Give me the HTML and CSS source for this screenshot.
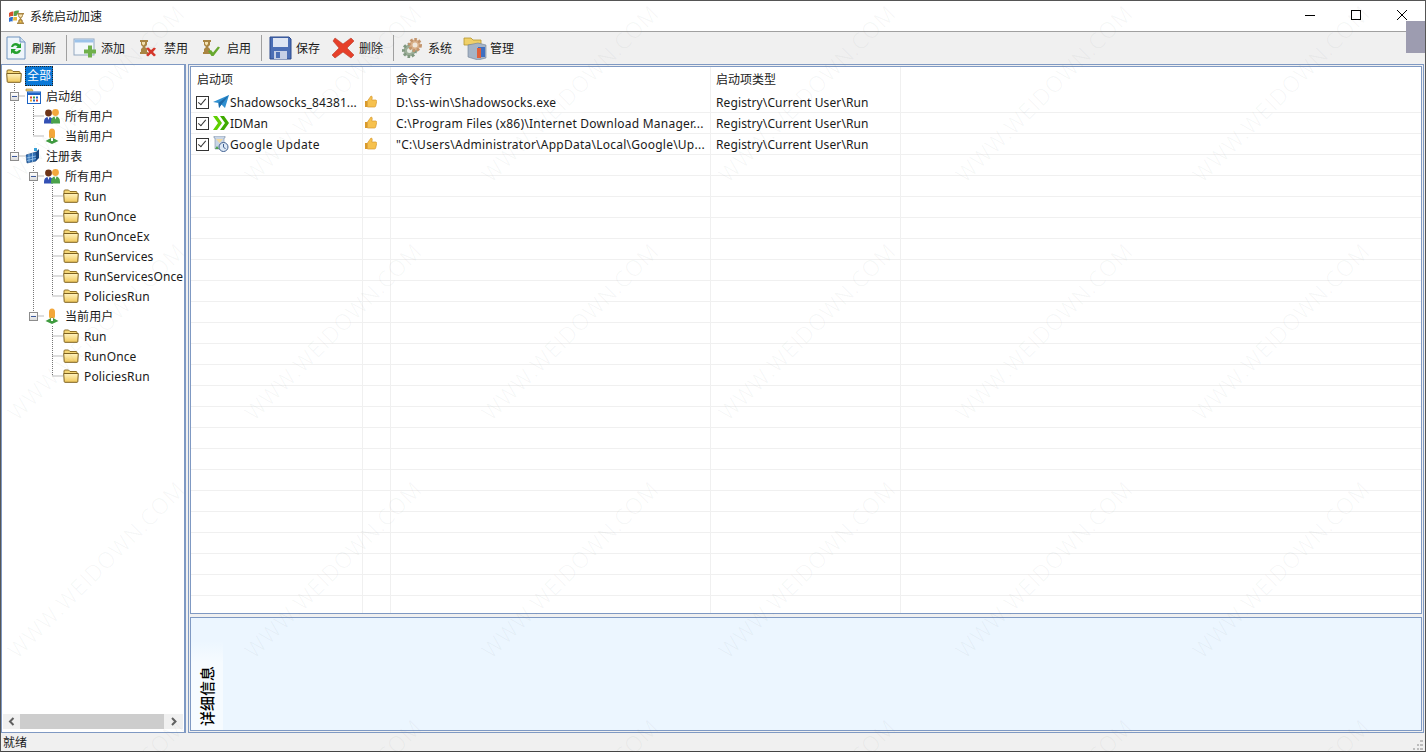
FILE: index.html
```html
<!DOCTYPE html>
<html>
<head>
<meta charset="utf-8">
<title>系统启动加速</title>
<link rel="stylesheet" href="styles.css">
</head>
<body>

<!-- iconos -->
<svg class="defs" width="0" height="0">
  <defs>
    <linearGradient id="gFolder" x1="0" y1="0" x2="0" y2="1"><stop offset="0" stop-color="#fff3c0"/><stop offset="1" stop-color="#f0c85a"/></linearGradient>
    <symbol id="folder" viewBox="0 0 16 14">
      <path d="M1 3.500V2q0-1 1-1h3.500l1.500 1.500h6q1 0 1 1v1H1z" fill="#f5d777" stroke="#8f7026"/>
      <path d="M.7 4.500h14.600l-.5 8q0 .8-.8.8H2q-.8 0-.8-.8z" fill="url(#gFolder)" stroke="#7d611f"/>
    </symbol>
    <symbol id="users" viewBox="0 0 16 15">
      <circle cx="4.500" cy="4" r="3.400" fill="#6e3518"/>
      <path d="M0 13q0-5 4.500-5T9 13v1.500H0z" fill="#3350b4"/>
      <circle cx="11.500" cy="3.500" r="3.400" fill="#f3a93e"/>
      <path d="M7 13q0-5.500 4.500-5.500T16 13v1.500H7z" fill="#4ba24a"/>
      <path d="M3.500 8h2L4.500 11zM10.500 7.500h2L11.500 10.500z" fill="#fff"/>
    </symbol>
    <symbol id="user" viewBox="0 0 16 16">
      <path d="M5 4a3 3.500 0 0 1 6 0v4a3 3 0 0 1-6 0z" fill="#f3a73a"/>
      <path d="M8 9.500 14.500 13 8 16 1.500 13z" fill="#3f9b3f"/>
      <path d="M7 10h2v3H7z" fill="#fff"/>
    </symbol>
    <symbol id="calendar" viewBox="0 0 16 16">
      <path d="M1 1h6l1 2H1z" fill="#f1d27a" stroke="#a8842c" stroke-width=".6"/>
      <rect x="2.500" y="4" width="13" height="11.500" fill="#fff" stroke="#1c63c4"/>
      <path d="M3 4.500h12v2.500H3z" fill="#1c63c4"/>
      <path d="M5 8.500h2v2H5z" fill="#d8412f"/><path d="M8 8.500h2v2H8z" fill="#3c9c3c"/><path d="M11 8.500h2v2h-2z" fill="#1c63c4"/>
      <path d="M5 11.500h2v2H5z" fill="#e8a72c"/><path d="M8 11.500h2v2H8z" fill="#1c63c4"/><path d="M11 11.500h2v2h-2z" fill="#d8412f"/>
    </symbol>
    <symbol id="registry" viewBox="0 0 16 16">
      <path d="M1 7 11 4v9L2 15z" fill="#2f6fb5" stroke="#143f78" stroke-width=".6"/>
      <path d="M4 6v8.500M7.500 5v9M1.500 10 11 8M2 12.500l9-2" stroke="#a9d0f0" stroke-width=".7"/>
      <path d="M11 4l3-3v9l-3 3z" fill="#16467f"/>
      <path d="M9 0h3v3H9z" fill="#39a3dc"/>
    </symbol>
    <symbol id="thumb" viewBox="0 0 13 13">
      <path d="M1 6h2.500v6H1z" fill="#d99a2b"/>
      <path d="M3.500 6 7 1q1.500 0 1.200 2L7.800 5H12q1 .5.700 1.500l-1 4.500q-.3 1-1.200 1H3.500z" fill="#f6c14e" stroke="#d79a2e" stroke-width=".7"/>
    </symbol>
  </defs>
</svg>

<div class="ventana">

  <!-- barra de titulo -->
  <div class="titulo">
    <svg class="titulo-icono" width="16" height="16" viewBox="0 0 16 16">
      <path d="M0 5q2-2 4.500-1.500L4 8Q2 7.500 0 9z" fill="#d8502e"/><path d="M5 3.500Q7 2 10 2.500L9.500 5H8v2.500Q6.500 8 4.500 8z" fill="#5aa04a"/>
      <path d="M0 10q2-1.500 4-1l-.5 4.500Q1.500 13 0 14z" fill="#2f6fd0"/><path d="M4.500 9H8v3.500H4z" fill="#e6b93f"/>
      <path d="M8 5h7v1.500h-1.200v2L12 10.500l1.800 2V14.500H15V16H8v-1.500h1.200v-2l1.800-2-1.800-2v-2H8z" fill="#a98543"/>
      <path d="M10 6.500h3v1.500l-1.500 1.500L10 8z" fill="#f5e3b0"/><path d="M10 14.500l1.500-2.500 1.500 2.500z" fill="#f2c64d"/>
    </svg>
    <span class="titulo-texto">系统启动加速</span>
    <div class="controles">
      <svg width="12" height="12" viewBox="0 0 12 12"><path d="M1 6.500h10" stroke="#000"/></svg>
      <svg width="12" height="12" viewBox="0 0 12 12"><rect x="1.500" y="1.500" width="9" height="9" fill="none" stroke="#000"/></svg>
      <svg width="12" height="12" viewBox="0 0 12 12"><path d="M1 1l10 10M11 1 1 11" stroke="#000"/></svg>
    </div>
  </div>

  <!-- barra de herramientas -->
  <div class="toolbar">
    <div class="boton b-refrescar">
      <svg width="20" height="24" viewBox="0 0 20 24">
        <path d="M1 1h13l5 5v17H1z" fill="#eef5fb" stroke="#6f93bf"/>
        <path d="M14 1v5h5" fill="#cfe0f0" stroke="#6f93bf"/>
        <path d="M5 11q1-4 5-4 2 0 3.500 1.500L15 7v5h-5l1.500-1.500Q9 8.500 7 11z" fill="#23a02f"/>
        <path d="M15 14q-1 4-5 4-2 0-3.500-1.500L5 18v-5h5l-1.500 1.500Q11 16.500 13 14z" fill="#23a02f"/>
      </svg>
      <span>刷新</span>
    </div>
    <div class="sep"></div>
    <div class="boton b-anadir">
      <svg width="24" height="24" viewBox="0 0 24 24">
        <rect x="1" y="3" width="20" height="16" fill="#f3f7fb" stroke="#93a8c0"/>
        <path d="M1.500 3.500h19v3h-19z" fill="#9cc3ea"/>
        <path d="M16 10h4v4h4v4h-4v4h-4v-4h-4v-4h4z" transform="translate(-1 -.5)" fill="#6fb04b"/>
      </svg>
      <span>添加</span>
    </div>
    <div class="boton b-prohibir">
      <svg width="18" height="24" viewBox="0 0 18 24">
        <path d="M1 4h8v2H8v3L6 11l2 2v3h1v2H1v-2h1v-3l2-2-2-2V6H1z" fill="#a98543"/>
        <path d="M3 6h3v2L4.500 9.500 3 8z" fill="#f4e2b0"/>
        <path d="M7 12l2.500-.5L12 14l3-2.500 2 1-3 3.500 3 3-2 1.500-3-3-3 3-2-1.500 3-3z" fill="#d4362a"/>
      </svg>
      <span>禁用</span>
    </div>
    <div class="boton b-habilitar">
      <svg width="18" height="24" viewBox="0 0 18 24">
        <path d="M1 4h8v2H8v3L6 11l2 2v3h1v2H1v-2h1v-3l2-2-2-2V6H1z" fill="#a98543"/>
        <path d="M3 6h3v2L4.500 9.500 3 8z" fill="#f4e2b0"/>
        <path d="M6 15l3-1 2 2.500 5-6 2 1-6.500 8.500h-2z" fill="#67a82f"/>
      </svg>
      <span>启用</span>
    </div>
    <div class="sep"></div>
    <div class="boton b-guardar">
      <svg width="23" height="24" viewBox="0 0 23 24">
        <path d="M1 1h19l2 2v20H1z" fill="#4c6fb5" stroke="#2c4a8c"/>
        <path d="M4 2h15v9H4z" fill="#dfe6f3"/>
        <path d="M5 15h13v8H5z" fill="#c6d0e6"/><path d="M7 16h4v6H7z" fill="#4c6fb5"/>
      </svg>
      <span>保存</span>
    </div>
    <div class="boton b-borrar">
      <svg width="23" height="22" viewBox="0 0 23 22">
        <path d="M3 1l8 6 8-6 3 3-7 7 7 7-3 3-8-6-8 6-3-3 7-7-6-7z" fill="#e6402a" stroke="#b83a28" stroke-width=".6"/>
      </svg>
      <span>删除</span>
    </div>
    <div class="sep"></div>
    <div class="boton b-sistema">
      <svg width="22" height="22" viewBox="0 0 22 22">
        <circle cx="8.500" cy="13.500" r="6" fill="#9cae98" stroke="#7f977f" stroke-width="3" stroke-dasharray="2.500 1.800"/>
        <circle cx="8.500" cy="13.500" r="2.500" fill="#e8ebe4"/>
        <circle cx="14" cy="8" r="5.500" fill="#d9b08a" stroke="#c2946c" stroke-width="3" stroke-dasharray="2.500 1.600"/>
        <circle cx="14" cy="8" r="2.500" fill="#f0e7db"/>
      </svg>
      <span>系统</span>
    </div>
    <div class="boton b-gestion">
      <svg width="24" height="24" viewBox="0 0 24 24">
        <path d="M1 2h7l2 2h8v5H1z" fill="#f0d068" stroke="#b3942e" stroke-width=".8"/>
        <path d="M5 9l10-2 8 2v13l-8 2-10-3z" fill="#a6b4c6" stroke="#6f7f95" stroke-width=".6"/>
        <path d="M15 11h7v10h-7z" fill="#3f6fc0"/><path d="M14 12h4v10h-4z" fill="#e0603a"/>
      </svg>
      <span>管理</span>
    </div>
  </div>

  <!-- cuerpo -->
  <div class="cuerpo">

    <div class="arbol">
      <svg class="arbol-lineas" width="180" height="320" viewBox="0 0 180 320">
        <path d="M14.500 20V92M14.500 32H25M14.500 92H25M33.500 42V72M33.500 52H44M33.500 72H44M33.500 102V252M33.500 112H44M33.500 252H44M52.500 122V232M52.500 132H63M52.500 152H63M52.500 172H63M52.500 192H63M52.500 212H63M52.500 232H63M52.500 262V312M52.500 272H63M52.500 292H63M52.500 312H63" stroke="#777" fill="none" stroke-dasharray="1 1"/>
      </svg>
      <div class="nodo n0"><svg class="ico" width="16" height="14"><use href="#folder"/></svg><span class="sel">全部</span></div>
      <div class="nodo n1"><i class="exp"></i><svg class="ico" width="16" height="16"><use href="#calendar"/></svg><span>启动组</span></div>
      <div class="nodo n2"><svg class="ico" width="16" height="15"><use href="#users"/></svg><span>所有用户</span></div>
      <div class="nodo n2"><svg class="ico" width="16" height="16"><use href="#user"/></svg><span>当前用户</span></div>
      <div class="nodo n1"><i class="exp"></i><svg class="ico" width="16" height="16"><use href="#registry"/></svg><span>注册表</span></div>
      <div class="nodo n2"><i class="exp"></i><svg class="ico" width="16" height="15"><use href="#users"/></svg><span>所有用户</span></div>
      <div class="nodo n3"><svg class="ico" width="16" height="14"><use href="#folder"/></svg><span>Run</span></div>
      <div class="nodo n3"><svg class="ico" width="16" height="14"><use href="#folder"/></svg><span>RunOnce</span></div>
      <div class="nodo n3"><svg class="ico" width="16" height="14"><use href="#folder"/></svg><span>RunOnceEx</span></div>
      <div class="nodo n3"><svg class="ico" width="16" height="14"><use href="#folder"/></svg><span>RunServices</span></div>
      <div class="nodo n3"><svg class="ico" width="16" height="14"><use href="#folder"/></svg><span>RunServicesOnce</span></div>
      <div class="nodo n3"><svg class="ico" width="16" height="14"><use href="#folder"/></svg><span>PoliciesRun</span></div>
      <div class="nodo n2"><i class="exp"></i><svg class="ico" width="16" height="16"><use href="#user"/></svg><span>当前用户</span></div>
      <div class="nodo n3"><svg class="ico" width="16" height="14"><use href="#folder"/></svg><span>Run</span></div>
      <div class="nodo n3"><svg class="ico" width="16" height="14"><use href="#folder"/></svg><span>RunOnce</span></div>
      <div class="nodo n3"><svg class="ico" width="16" height="14"><use href="#folder"/></svg><span>PoliciesRun</span></div>
      <div class="scroll-h">
        <svg width="17" height="15" viewBox="0 0 17 15"><path d="M10.500 4 7 7.500l3.500 3.500" fill="none" stroke="#606060" stroke-width="2"/></svg>
        <div class="scroll-thumb"></div>
        <svg width="19" height="15" viewBox="0 0 19 15"><path d="M8 4l3.500 3.500L8 11" fill="none" stroke="#606060" stroke-width="2"/></svg>
      </div>
    </div>

    <div class="derecha">
      <div class="lista">
        <div class="fila cabecera"><div>启动项</div><div></div><div>命令行</div><div>启动项类型</div><div></div></div>
        <div class="fila">
          <div class="c-nombre"><i class="check"></i>
            <svg class="app" width="16" height="16" viewBox="0 0 16 16"><path d="M0 8 16 1l-4 13-3.500-3.500L6 14l-.5-5z" fill="#2f8fd0"/><path d="M5.500 9 16 1 8.500 10.500 6 14z" fill="#1b69a8"/></svg>
            <span class="ancho">Shadowsocks_84381...</span></div>
          <div class="c-voto"><svg width="13" height="13"><use href="#thumb"/></svg></div>
          <div class="c-cmd">D:\ss-win\Shadowsocks.exe</div><div class="c-tipo">Registry\Current User\Run</div><div></div>
        </div>
        <div class="fila">
          <div class="c-nombre"><i class="check"></i>
            <svg class="app" width="16" height="16" viewBox="0 0 16 16"><path d="M0 1h4l5 7-5 7H0l5-7z" fill="#5fd000"/><path d="M7 1h4l5 7-5 7H7l5-7z" fill="#3faa00"/></svg>
            <span>IDMan</span></div>
          <div class="c-voto"><svg width="13" height="13"><use href="#thumb"/></svg></div>
          <div class="c-cmd">C:\Program Files (x86)\Internet Download Manager...</div><div class="c-tipo">Registry\Current User\Run</div><div></div>
        </div>
        <div class="fila">
          <div class="c-nombre"><i class="check"></i>
            <svg class="app" width="16" height="16" viewBox="0 0 16 16"><path d="M1 0h11v2h-1v11H2V2H1z" fill="#c9d6e6" stroke="#7d8ea5" stroke-width=".6"/><path d="M3 3h7l-3.500 4z" fill="#f2d9a0"/><circle cx="10.500" cy="11" r="4.500" fill="#dce8f5" stroke="#3f5f90"/><path d="M10.500 8v3l2 2" stroke="#3f5f90" fill="none"/><path d="M4 10l2 3H2z" fill="#4ca14c"/></svg>
            <span class="mas-ancho">Google Update</span></div>
          <div class="c-voto"><svg width="13" height="13"><use href="#thumb"/></svg></div>
          <div class="c-cmd">"C:\Users\Administrator\AppData\Local\Google\Up...</div><div class="c-tipo">Registry\Current User\Run</div><div></div>
        </div>
        <div class="fila"><div></div><div></div><div></div><div></div><div></div></div>
        <div class="fila"><div></div><div></div><div></div><div></div><div></div></div>
        <div class="fila"><div></div><div></div><div></div><div></div><div></div></div>
        <div class="fila"><div></div><div></div><div></div><div></div><div></div></div>
        <div class="fila"><div></div><div></div><div></div><div></div><div></div></div>
        <div class="fila"><div></div><div></div><div></div><div></div><div></div></div>
        <div class="fila"><div></div><div></div><div></div><div></div><div></div></div>
        <div class="fila"><div></div><div></div><div></div><div></div><div></div></div>
        <div class="fila"><div></div><div></div><div></div><div></div><div></div></div>
        <div class="fila"><div></div><div></div><div></div><div></div><div></div></div>
        <div class="fila"><div></div><div></div><div></div><div></div><div></div></div>
        <div class="fila"><div></div><div></div><div></div><div></div><div></div></div>
        <div class="fila"><div></div><div></div><div></div><div></div><div></div></div>
        <div class="fila"><div></div><div></div><div></div><div></div><div></div></div>
        <div class="fila"><div></div><div></div><div></div><div></div><div></div></div>
        <div class="fila"><div></div><div></div><div></div><div></div><div></div></div>
        <div class="fila"><div></div><div></div><div></div><div></div><div></div></div>
        <div class="fila"><div></div><div></div><div></div><div></div><div></div></div>
        <div class="fila"><div></div><div></div><div></div><div></div><div></div></div>
        <div class="fila"><div></div><div></div><div></div><div></div><div></div></div>
        <div class="fila"><div></div><div></div><div></div><div></div><div></div></div>
        <div class="fila"><div></div><div></div><div></div><div></div><div></div></div>
      </div>
      <div class="detalle">
        <div class="detalle-tab"><span>详细信息</span></div>
      </div>
    </div>
  </div>

  <!-- barra de estado -->
  <div class="estado">
    <span>就绪</span>
    <svg class="grip" width="10" height="10" viewBox="0 0 10 10"><path d="M7 0h3v2H7zM4 4h2v2H4zM7 4h3v2H7zM0 8h2v2H0zM4 8h2v2H4zM7 8h3v2H7z" fill="#bdbdbd"/></svg>
  </div>

  <div class="marca-gris"></div>

  <!-- marca de agua -->
  <div class="marcas">
    <span>WWW.WEIDOWN.COM</span><span>WWW.WEIDOWN.COM</span><span>WWW.WEIDOWN.COM</span><span>WWW.WEIDOWN.COM</span><span>WWW.WEIDOWN.COM</span><span>WWW.WEIDOWN.COM</span>
    <span>WWW.WEIDOWN.COM</span><span>WWW.WEIDOWN.COM</span><span>WWW.WEIDOWN.COM</span><span>WWW.WEIDOWN.COM</span><span>WWW.WEIDOWN.COM</span><span>WWW.WEIDOWN.COM</span>
    <span>WWW.WEIDOWN.COM</span><span>WWW.WEIDOWN.COM</span><span>WWW.WEIDOWN.COM</span><span>WWW.WEIDOWN.COM</span><span>WWW.WEIDOWN.COM</span><span>WWW.WEIDOWN.COM</span>
    <span>WWW.WEIDOWN.COM</span><span>WWW.WEIDOWN.COM</span><span>WWW.WEIDOWN.COM</span><span>WWW.WEIDOWN.COM</span><span>WWW.WEIDOWN.COM</span><span>WWW.WEIDOWN.COM</span>
  </div>
</div>

</body>
</html>
```

FILE: styles.css
```css
/* general */
html, body
{
  margin: 0;
  padding: 0;
  height: 100%;
  overflow: hidden;
}

body
{
  font-family: "Noto Sans", "Noto Sans CJK SC", sans-serif;
  font-size: 12px;
  color: #1a1a1a;
}

.defs
{
  position: absolute;
}

.ventana
{
  position: relative;
  width: 1426px;
  height: 752px;
  box-sizing: border-box;
  border: 1px solid #555;
  border-bottom-color: #444;
  display: flex;
  flex-direction: column;
  background-color: #f0f0f0;
  overflow: hidden;
}

/* barra de titulo */
.titulo
{
  height: 30px;
  flex: none;
  display: flex;
  align-items: center;
  background-color: white;
  border-bottom: 1px solid #a0a0a0;
  padding-left: 8px;
}

.titulo-icono
{
  margin-right: 5px;
}

.controles
{
  margin-left: auto;
  display: flex;
  gap: 34px;
  padding-right: 17px;
  margin-top: -2px;
}

/* barra de herramientas */
.toolbar
{
  height: 32px;
  flex: none;
  display: flex;
  align-items: center;
  padding-left: 5px;
}

.boton
{
  display: flex;
  align-items: center;
  gap: 6px;
}

.sep
{
  width: 1px;
  height: 26px;
  background-color: #a0a0a0;
}

.b-refrescar { margin-right: 10px; }
.b-anadir { margin-left: 6px; gap: 4px; margin-right: 14px; }
.b-prohibir { margin-right: 14px; gap: 7px; }
.b-habilitar { margin-right: 10px; gap: 7px; }
.b-guardar { margin-left: 7px; gap: 4px; margin-right: 12px; }
.b-borrar { gap: 4px; margin-right: 10px; }
.b-sistema { margin-left: 7px; gap: 5px; margin-right: 11px; }
.b-gestion { gap: 3px; }

/* cuerpo */
.cuerpo
{
  flex: 1;
  display: flex;
  min-height: 0;
}

.arbol
{
  position: relative;
  width: 182px;
  padding-top: 1px;
  background-color: white;
  border: 1px solid #7f99c3;
  border-right-width: 2px;
  letter-spacing: .12px;
}

.arbol-lineas
{
  position: absolute;
  left: -2px;
  top: -1px;
}

.nodo
{
  position: relative;
  height: 20px;
  display: flex;
  align-items: center;
  white-space: nowrap;
}

.ico
{
  flex: none;
  margin-right: 5px;
}

.n0 { padding-left: 4px; }
.n1 { padding-left: 23px; }
.n2 { padding-left: 42px; }
.n3 { padding-left: 61px; }

.n0 .ico { margin-right: 3px; }

.sel
{
  background-color: #0a78d7;
  color: white;
  padding: 2px;
  outline: 1px dotted #222;
  outline-offset: -1px;
  line-height: 16px;
  letter-spacing: 0;
}

.exp
{
  position: absolute;
  width: 7px;
  height: 7px;
  margin-left: -15px;
  border: 1px solid #8c8c8c;
  background: linear-gradient(#3d5a9c, #3d5a9c) center/5px 1px no-repeat, linear-gradient(#fff, #dcdcdc);
}

.scroll-h
{
  position: absolute;
  left: 1px;
  right: 1px;
  bottom: 3px;
  height: 15px;
  display: flex;
  background-color: #f0f0f0;
}

.scroll-thumb
{
  flex: 1;
  background-color: #cdcdcd;
}

/* parte derecha */
.derecha
{
  flex: 1;
  margin-left: 2px;
  margin-right: 1px;
  border: 1px solid #7f99c3;
  padding: 1px;
  background-color: #f0f0f0;
  display: flex;
  flex-direction: column;
  gap: 3px;
  min-width: 0;
}

.lista
{
  flex: 1;
  min-height: 0;
  background-color: white;
  border: 1px solid #7f99c3;
  overflow: hidden;
}

.fila
{
  display: grid;
  grid-template-columns: 172px 28px 320px 190px 1fr;
  height: 21px;
  box-sizing: border-box;
  border-bottom: 1px solid #f0f0f0;
}

.fila > div
{
  display: flex;
  align-items: center;
  padding-left: 5px;
  border-right: 1px solid #f0f0f0;
  white-space: nowrap;
  overflow: hidden;
}

.fila > div:last-child
{
  border-right: none;
}

.cabecera
{
  height: 25px;
  border-bottom: none;
  color: #222;
}

.cabecera > div
{
  padding-bottom: 2px;
}

.cabecera > div:first-child
{
  padding-left: 6px;
}

.c-nombre
{
  gap: 4px;
}

.ancho { letter-spacing: .1px; }
.mas-ancho { letter-spacing: .38px; }

.fila > .c-voto
{
  padding-left: 1px;
  padding-bottom: 2px;
}

.c-cmd { letter-spacing: .24px; }
.c-tipo { letter-spacing: .12px; }

.check
{
  flex: none;
  width: 11px;
  height: 11px;
  border: 1px solid #333;
  background: white;
  position: relative;
}

.check::after
{
  content: "";
  position: absolute;
  left: 3px;
  top: 0;
  width: 3px;
  height: 7px;
  border: solid #333;
  border-width: 0 1px 1px 0;
  transform: rotate(40deg);
}

.app
{
  flex: none;
  margin-right: -3px;
}

.detalle
{
  height: 112px;
  flex: none;
  border: 1px solid #7f99c3;
  background-color: #ecf6ff;
  display: flex;
}

.detalle-tab
{
  width: 32px;
  display: flex;
  align-items: flex-end;
  justify-content: center;
  background: linear-gradient(to bottom, #ecf6ff 20%, #f6fbff 40%);
  padding-bottom: 4px;
}

.detalle-tab span
{
  writing-mode: vertical-rl;
  text-orientation: sideways;
  transform: rotate(180deg);
  font-size: 15px;
  font-weight: 500;
  color: #000;
  line-height: 15px;
}

/* barra de estado */
.estado
{
  height: 18px;
  flex: none;
  display: flex;
  align-items: center;
  padding-left: 2px;
  position: relative;
}

.grip
{
  margin-left: auto;
  margin-right: 2px;
  margin-top: 6px;
}

/* cuadro gris arriba a la derecha */
.marca-gris
{
  position: absolute;
  right: -1px;
  top: 20px;
  width: 20px;
  height: 32px;
  background-color: #9d9cb0;
}

/* marca de agua */
.marcas
{
  position: absolute;
  left: -24px;
  top: -27px;
  display: grid;
  grid-template-columns: repeat(6, 237px);
  grid-auto-rows: 238px;
  pointer-events: none;
}

.marcas span
{
  align-self: center;
  justify-self: center;
  transform: rotate(-45deg);
  font-family: "Open Sans", "Noto Sans", sans-serif;
  font-weight: 300;
  font-size: 22px;
  letter-spacing: 1px;
  color: rgba(120, 130, 130, 0.075);
  white-space: nowrap;
}
```
